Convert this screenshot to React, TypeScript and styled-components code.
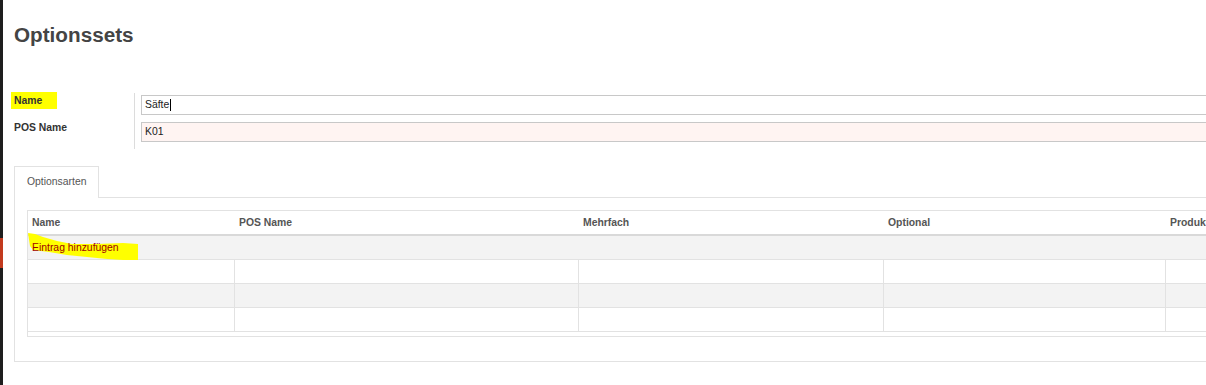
import React from "react";
import styled, { createGlobalStyle } from "styled-components";

const GlobalStyle = createGlobalStyle`
  html, body { margin: 0; padding: 0; background: #fff; overflow: hidden; }
  body { font-family: "Liberation Sans", Arial, sans-serif; }
`;

const Page = styled.div`
  display: flex;
  width: 1206px;
  height: 385px;
  overflow: hidden;
`;

const Strip = styled.div`
  flex: 0 0 3px;
  background: #1e1e1e;
  padding-top: 238px;
  box-sizing: border-box;
`;

const RedMark = styled.div`
  height: 30px;
  background: #c23a1e;
`;

const Main = styled.div`
  flex: 0 0 auto;
  width: 1400px;
  padding-left: 11px;
  box-sizing: border-box;
`;

const Title = styled.h1`
  margin: 0;
  padding-top: 23px;
  font-size: 20.7px;
  line-height: 24px;
  font-weight: bold;
  color: #444;
`;

const Form = styled.div`
  display: grid;
  grid-template-columns: 120px 1fr;
  margin-top: 46px;
`;

const Labels = styled.div`
  display: flex;
  flex-direction: column;
  gap: 15px;
  padding-top: 2px;
`;

const Label = styled.div<{ $marked?: boolean }>`
  font-size: 10.4px;
  line-height: 12px;
  font-weight: bold;
  color: #333;
  span {
    display: inline-block;
    ${(p) => (p.$marked ? "background: #ffff00; padding: 3px 15px 2px 3px; margin: -3px 0 -2px -3px;" : "")}
  }
`;

const Inputs = styled.div`
  border-left: 1px solid #dcdcdc;
  padding: 2px 0 7px 6px;
  display: flex;
  flex-direction: column;
  gap: 7px;
`;

const Field = styled.div<{ $tint?: boolean }>`
  height: 20px;
  box-sizing: border-box;
  border: 1px solid #c8c8c8;
  background: ${(p) => (p.$tint ? "#fff4f2" : "#fff")};
  padding-left: 3px;
  font-size: 10.4px;
  line-height: 18px;
  color: #222;
  display: flex;
  align-items: center;
`;

const Caret = styled.span`
  display: inline-block;
  width: 1px;
  height: 12px;
  background: #000;
  margin-left: 1px;
`;

const Tabs = styled.div`
  margin-top: 17px;
`;

const TabBar = styled.div`
  display: flex;
`;

const Tab = styled.div`
  width: 85px;
  height: 32px;
  box-sizing: border-box;
  border: 1px solid #e2e2e2;
  border-bottom: none;
  padding: 8px 0 0 12px;
  font-size: 10.4px;
  line-height: 14px;
  color: #555;
  background: #fff;
  margin-bottom: -1px;
  position: relative;
`;

const Panel = styled.div`
  border: 1px solid #e2e2e2;
  border-right: none;
  padding: 12px 0 24px 12px;
`;

const Table = styled.div`
  border: 1px solid #e2e2e2;
  border-right: none;
  position: relative;
`;

const cols = "206px 344px 305px 282px 250px";

const HeadRow = styled.div`
  display: grid;
  grid-template-columns: ${cols};
  height: 23px;
  border-bottom: 2px solid #d9d9d9;
`;

const HeadCell = styled.div`
  padding-left: 5px;
  font-size: 10.4px;
  font-weight: bold;
  color: #555;
  line-height: 23px;
  &:first-child { padding-left: 4px; }
`;

const AddRow = styled.div`
  position: relative;
  height: 23px;
  background: #f3f3f3;
  border-bottom: 1px solid #e2e2e2;
  padding-left: 4px;
  font-size: 10.4px;
  line-height: 23px;
  color: #a10000;
`;

const AddText = styled.span`
  position: relative;
  z-index: 1;
`;

const Marker = styled.svg`
  position: absolute;
  left: -1px;
  top: -3px;
  z-index: 0;
`;

const BodyRow = styled.div<{ $alt?: boolean }>`
  display: grid;
  grid-template-columns: ${cols};
  height: 23px;
  border-bottom: 1px solid #e2e2e2;
  background: ${(p) => (p.$alt ? "#f3f3f3" : "#fff")};
`;

const BodyCell = styled.div`
  & + & { border-left: 1px solid #e2e2e2; }
`;

const Footer = styled.div`
  height: 4px;
`;

const headers = ["Name", "POS Name", "Mehrfach", "Optional", "Produkte"];

export default function App() {
  return (
    <>
      <GlobalStyle />
      <Page>
        <Strip>
          <RedMark />
        </Strip>
        <Main>
          <Title>Optionssets</Title>
          <Form>
            <Labels>
              <Label $marked>
                <span>Name</span>
              </Label>
              <Label>
                <span>POS Name</span>
              </Label>
            </Labels>
            <Inputs>
              <Field>
                Säfte
                <Caret />
              </Field>
              <Field $tint>K01</Field>
            </Inputs>
          </Form>
          <Tabs>
            <TabBar>
              <Tab>Optionsarten</Tab>
            </TabBar>
            <Panel>
              <Table>
                <HeadRow>
                  {headers.map((h) => (
                    <HeadCell key={h}>{h}</HeadCell>
                  ))}
                </HeadRow>
                <AddRow>
                  <Marker width="112" height="30" viewBox="0 0 112 30">
                    <path
                      d="M1 0 L8 1 L16 4 L30 8 L45 11 L70 11 L96 10 L111 11 L111 27 L96 27 L80 26 L60 24 L40 22 L22 19 L6 17 L3 13 Z"
                      fill="#ffff00"
                    />
                  </Marker>
                  <AddText>Eintrag hinzufügen</AddText>
                </AddRow>
                {[false, true, false].map((alt, i) => (
                  <BodyRow key={i} $alt={alt}>
                    {headers.map((h) => (
                      <BodyCell key={h} />
                    ))}
                  </BodyRow>
                ))}
                <Footer />
              </Table>
            </Panel>
          </Tabs>
        </Main>
      </Page>
    </>
  );
}
